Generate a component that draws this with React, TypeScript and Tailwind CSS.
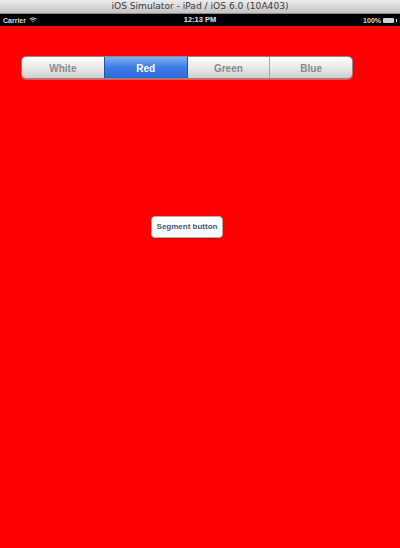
import React from "react";

export default function App() {
  const segs = ["White", "Red", "Green", "Blue"];
  return (
    <div className="w-[400px] h-[548px] flex flex-col overflow-hidden" style={{ fontFamily: '"Liberation Sans", Arial, sans-serif' }}>
      <div className="h-[14px] flex items-center justify-center bg-gradient-to-b from-[#ececec] to-[#c4c4c4] border-b border-[#8a8a8a]">
        <span className="leading-none text-[#3a3a3a]" style={{ fontFamily: '"DejaVu Sans", sans-serif', fontSize: "9.1px" }}>iOS Simulator - iPad / iOS 6.0 (10A403)</span>
      </div>
      <div className="h-[12px] bg-black flex items-center px-[3px] relative">
        <div className="flex items-center gap-[3px]">
          <span className="text-[7px] font-bold text-[#d8d8d8] leading-none">Carrier</span>
          <svg width="8" height="6" viewBox="0 0 8 6">
            <path d="M0.5 2 Q4 -0.5 7.5 2" stroke="#d0d0d0" strokeWidth="1" fill="none" />
            <path d="M1.8 3.3 Q4 1.6 6.2 3.3" stroke="#d0d0d0" strokeWidth="1" fill="none" />
            <path d="M3 4.6 L4 5.6 L5 4.6 Q4 3.8 3 4.6Z" fill="#d0d0d0" />
          </svg>
        </div>
        <span className="absolute left-0 right-0 text-center text-[7.5px] font-bold text-[#e0e0e0] leading-none">12:13 PM</span>
        <div className="ml-auto flex items-center gap-[2px]">
          <span className="text-[7px] font-bold text-[#d8d8d8] leading-none">100%</span>
          <div className="w-[11px] h-[5px] bg-[#d0d0d0] rounded-[1px]" />
          <div className="w-[1px] h-[3px] bg-[#d0d0d0]" />
        </div>
      </div>
      <div className="flex-1 bg-[#ff0000] flex flex-col">
        <div className="mt-[30px] ml-[21px] w-[332px] h-[23px] flex rounded-[5px] overflow-hidden border border-[#8c8c8c] shadow-[0_1px_0_rgba(255,255,255,0.3)]">
          {segs.map((s, i) => (
            <div
              key={s}
              className={
                i === 1
                  ? "flex-1 flex items-center justify-center pt-[1px] bg-gradient-to-b from-[#7fadf2] via-[#3c7ce8] to-[#2d6bdb] text-white text-[10px] font-bold border-x border-[#2a4f9a]"
                  : "flex-1 flex items-center justify-center pt-[1px] bg-gradient-to-b from-[#fdfdfd] via-[#e9e9e9] to-[#cfcfcf] text-[#8a8a8a] text-[10px] font-bold " +
                    (i === 3 ? "border-l border-[#a8a8a8]" : "")
              }
            >
              {s}
            </div>
          ))}
        </div>
        <div className="mt-[137px] ml-[151px] w-[72px] h-[22px] bg-white rounded-[4px] border border-[#b0b0b0] flex items-center justify-center shadow-[0_1px_1px_rgba(0,0,0,0.2)]">
          <span className="text-[8px] font-bold text-[#445680]">Segment button</span>
        </div>
      </div>
    </div>
  );
}
